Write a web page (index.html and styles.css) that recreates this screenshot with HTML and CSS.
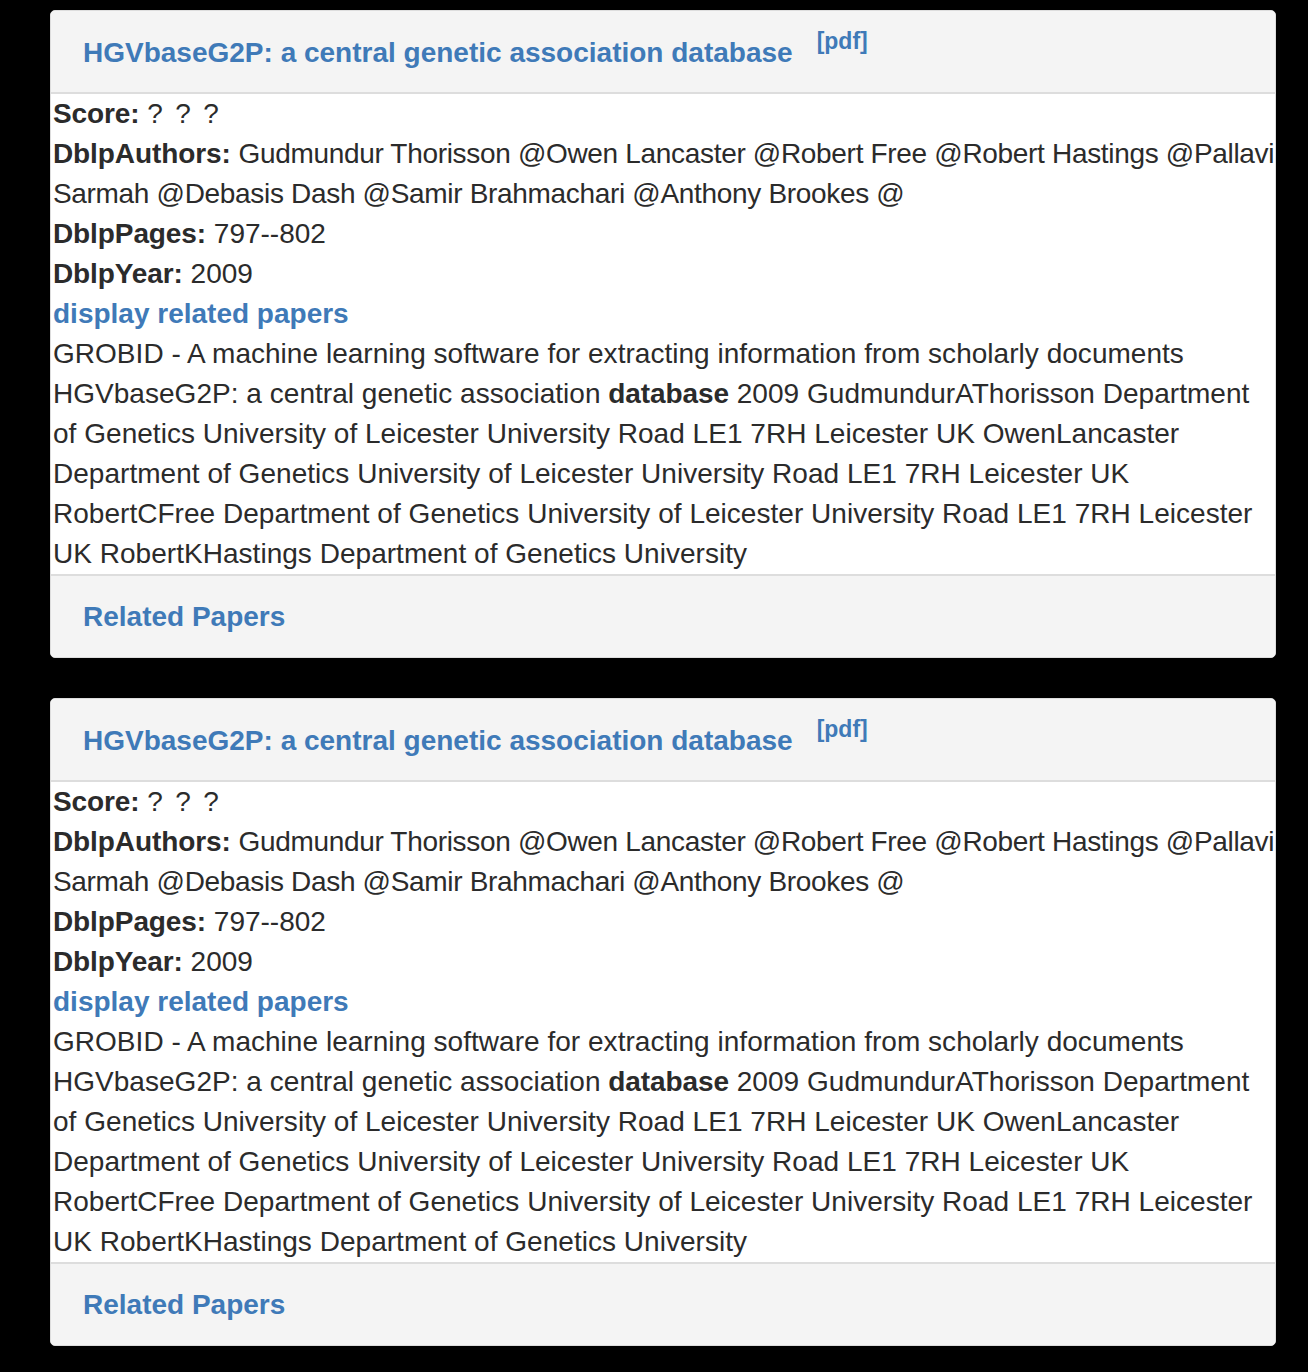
FILE: index.html
```html
<!DOCTYPE html>
<html>
<head>
<meta charset="utf-8">
<link rel="stylesheet" href="styles.css">
</head>
<body>
<div class="list">
  <div class="panel">
    <div class="panel-heading">
      <a class="title" href="#">HGVbaseG2P: a central genetic association database</a>
      <sup class="pdf"><a href="#">[pdf]</a></sup>
    </div>
    <div class="panel-body">
      <div><b>Score:</b> <span class="q">? ? ?</span></div>
      <div><b>DblpAuthors:</b> <span class="auth">Gudmundur Thorisson @Owen Lancaster @Robert Free @Robert Hastings @Pallavi<br>Sarmah @Debasis Dash @Samir Brahmachari @Anthony Brookes @</span></div>
      <div><b>DblpPages:</b> 797--802</div>
      <div><b>DblpYear:</b> 2009</div>
      <div><a class="rel" href="#">display related papers</a></div>
      <div class="abs">GROBID - A machine learning software for extracting information from scholarly documents<br>HGVbaseG2P: a central genetic association <b>database</b> 2009 GudmundurAThorisson Department<br>of Genetics University of Leicester University Road LE1 7RH Leicester UK OwenLancaster<br>Department of Genetics University of Leicester University Road LE1 7RH Leicester UK<br>RobertCFree Department of Genetics University of Leicester University Road LE1 7RH Leicester<br>UK RobertKHastings Department of Genetics University</div>
    </div>
    <div class="panel-footer"><a href="#">Related Papers</a></div>
  </div>
  <div class="panel">
    <div class="panel-heading">
      <a class="title" href="#">HGVbaseG2P: a central genetic association database</a>
      <sup class="pdf"><a href="#">[pdf]</a></sup>
    </div>
    <div class="panel-body">
      <div><b>Score:</b> <span class="q">? ? ?</span></div>
      <div><b>DblpAuthors:</b> <span class="auth">Gudmundur Thorisson @Owen Lancaster @Robert Free @Robert Hastings @Pallavi<br>Sarmah @Debasis Dash @Samir Brahmachari @Anthony Brookes @</span></div>
      <div><b>DblpPages:</b> 797--802</div>
      <div><b>DblpYear:</b> 2009</div>
      <div><a class="rel" href="#">display related papers</a></div>
      <div class="abs">GROBID - A machine learning software for extracting information from scholarly documents<br>HGVbaseG2P: a central genetic association <b>database</b> 2009 GudmundurAThorisson Department<br>of Genetics University of Leicester University Road LE1 7RH Leicester UK OwenLancaster<br>Department of Genetics University of Leicester University Road LE1 7RH Leicester UK<br>RobertCFree Department of Genetics University of Leicester University Road LE1 7RH Leicester<br>UK RobertKHastings Department of Genetics University</div>
    </div>
    <div class="panel-footer"><a href="#">Related Papers</a></div>
  </div>
</div>
</body>
</html>
```

FILE: styles.css
```css
html, body {
  margin: 0;
  padding: 0;
  background: #000;
}
body {
  font-family: "Liberation Sans", Arial, Helvetica, sans-serif;
  color: #2b2b2b;
  font-size: 28px;
  line-height: 40px;
}
a {
  color: #3f7ab8;
  text-decoration: none;
  font-weight: bold;
}
.list {
  padding: 10px 32px 0 50px;
  display: flex;
  flex-direction: column;
  gap: 40px;
}
.panel {
  background: #fff;
  border: 1px solid #ddd;
  border-radius: 5px;
  overflow: hidden;
}
.panel-heading {
  background: #f4f4f4;
  border-bottom: 2px solid #ddd;
  height: 81px;
  padding: 0 32px;
  display: flex;
  align-items: center;
}
.title {
  font-size: 28px;
  line-height: 40px;
  position: relative;
  top: 1px;
}
.pdf {
  font-size: 23px;
  line-height: 22px;
  margin-left: 24px;
  align-self: flex-start;
  margin-top: 19px;
}
.panel-body {
  padding: 0 2px;
  white-space: nowrap;
}
.panel-body b {
  font-weight: bold;
  letter-spacing: -0.1px;
}
.q {
  word-spacing: 4.6px;
}
.auth {
  letter-spacing: -0.32px;
}
.abs {
  letter-spacing: 0.03px;
}
.rel {
  font-size: 28px;
}
.panel-footer {
  background: #f4f4f4;
  border-top: 2px solid #ddd;
  height: 81px;
  padding: 0 32px;
  display: flex;
  align-items: center;
}
.panel-footer a {
  font-size: 28px;
}
```
